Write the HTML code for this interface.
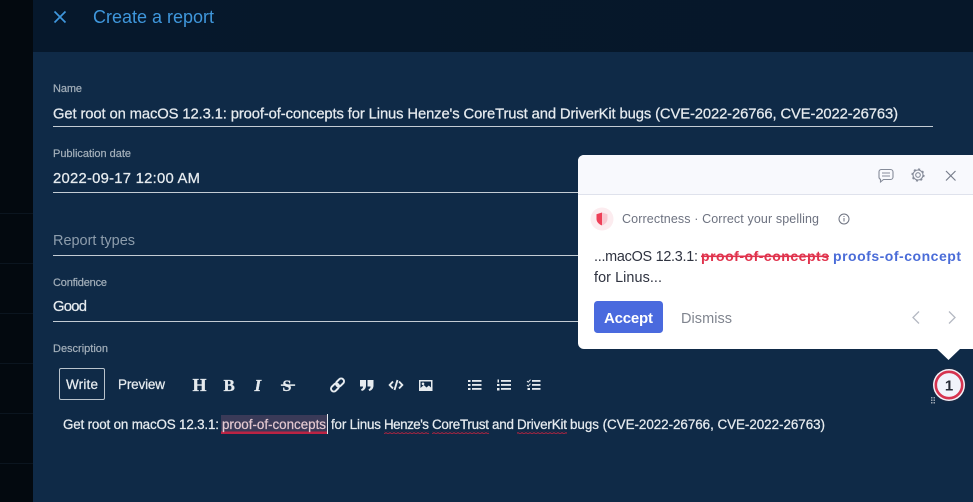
<!DOCTYPE html>
<html><head><meta charset="utf-8"><title>Create a report</title>
<style>
html,body{margin:0;padding:0;background:#03090f;width:973px;height:502px;overflow:hidden}
svg{display:block;position:absolute;left:0;top:0}
text{font-family:"Liberation Sans",sans-serif;white-space:pre}
.lb{font-size:11px;fill:#a3afba;stroke:#a3afba;stroke-width:.2px}
.v{font-size:14.8px;fill:#e6ebef;stroke:#e6ebef;stroke-width:.25px}
.d{font-size:13.4px;fill:#e6ebef;stroke:#e6ebef;stroke-width:.25px}
.p{font-size:14.4px;fill:#2f3340}
</style></head><body>
<svg width="973" height="502" viewBox="0 0 973 502" xmlns="http://www.w3.org/2000/svg">
<defs>
<linearGradient id="hd" x1="0" y1="0" x2="1" y2="0"><stop offset="0" stop-color="#06182c"/><stop offset="1" stop-color="#061729"/></linearGradient>
<pattern id="sq" width="4" height="3" patternUnits="userSpaceOnUse"><path d="M0 2 L2 0.6 L4 2" fill="none" stroke="#a82440" stroke-width="1"/></pattern>
</defs>
<rect width="973" height="502" fill="#0f2a47"/>
<rect x="0" y="0" width="33" height="502" fill="#03090f"/>
<g fill="#0b151f"><rect y="213" width="33" height="1"/><rect y="263" width="33" height="1"/><rect y="313" width="33" height="1"/><rect y="363" width="33" height="1"/><rect y="413" width="33" height="1"/><rect y="463" width="33" height="1"/></g>
<rect x="33" y="0" width="940" height="52" fill="url(#hd)"/>
<path d="M54.500 11.500L65.500 22.500M65.500 11.500L54.500 22.500" stroke="#3f97dc" stroke-width="1.700" fill="none"/>
<text x="93" y="23" font-size="18" fill="#3f97dc" textLength="121">Create a report</text>

<text class="lb" x="53" y="92" textLength="29">Name</text>
<text class="v" x="53" y="118.500" textLength="845">Get root on macOS 12.3.1: proof-of-concepts for Linus Henze's CoreTrust and DriverKit bugs (CVE-2022-26766, CVE-2022-26763)</text>
<rect x="53" y="126" width="880" height="1" fill="#c3ccd4"/>

<text class="lb" x="53" y="157" textLength="78">Publication date</text>
<text class="v" x="53" y="183" textLength="147">2022-09-17 12:00 AM</text>
<rect x="53" y="192" width="880" height="1" fill="#c3ccd4"/>

<text x="53" y="245" font-size="14.5" fill="#8d9dac" textLength="82">Report types</text>
<rect x="53" y="255" width="880" height="1" fill="#c3ccd4"/>

<text class="lb" x="53" y="286" textLength="54">Confidence</text>
<text class="v" x="53" y="311" textLength="34">Good</text>
<rect x="53" y="321" width="880" height="1" fill="#c3ccd4"/>

<text class="lb" x="53" y="352" textLength="55">Description</text>

<rect x="59.500" y="368.500" width="45" height="31" rx="1.500" fill="none" stroke="#b9c3cc" stroke-width="1"/>
<text x="66" y="389" font-size="13.500" fill="#e6ebef" stroke="#e6ebef" stroke-width=".25" textLength="32">Write</text>
<text x="118" y="389" font-size="13.500" fill="#e6ebef" stroke="#e6ebef" stroke-width=".25" textLength="47">Preview</text>

<g fill="#e6ebef" stroke="#e6ebef" stroke-width=".3">
<text x="192.500" y="391" font-size="18" font-weight="700" style="font-family:'Liberation Serif',serif" textLength="15">H</text>
<text x="223.500" y="391" font-size="17" font-weight="700" style="font-family:'Liberation Serif',serif" textLength="11">B</text>
<text x="254.500" y="391" font-size="17" font-weight="700" font-style="italic" style="font-family:'Liberation Serif',serif" textLength="8">I</text>
<text x="282.500" y="391" font-size="16" font-weight="700" style="font-family:'Liberation Serif',serif" textLength="11">S</text>
<rect x="281" y="384.500" width="14" height="1.200"/>
</g>
<g fill="none" stroke="#e6ebef" stroke-width="2" transform="rotate(-45 337.500 385)">
<rect x="329.500" y="382.200" width="9" height="5.600" rx="2.800"/>
<rect x="336.500" y="382.200" width="9" height="5.600" rx="2.800"/>
</g>
<path d="M360 380h6v5.500c0 2.700-1.500 4.800-4.200 5.500l-.8-1.700c1.400-.5 2-1.400 2.100-2.800H360zM367.500 380h6v5.500c0 2.700-1.500 4.800-4.200 5.500l-.8-1.700c1.400-.5 2-1.400 2.100-2.800h-3.100z" fill="#e6ebef"/>
<path d="M393 381.500l-3.300 3.500 3.300 3.500M399 381.500l3.300 3.500-3.300 3.500M397.500 380l-3 10" stroke="#e6ebef" stroke-width="1.900" fill="none"/>
<path fill-rule="evenodd" d="M419 380h13.500v11H419zM420.500 381.500v6.500l3.300-3 2.700 2.500 2.300-2 2.200 2v-6zM423 382.500a1.300 1.300 0 1 1 0 2.600a1.300 1.300 0 1 1 0-2.600z" fill="#e6ebef"/>
<g fill="#e6ebef">
<rect x="468" y="380" width="2.500" height="2"/><rect x="468" y="384" width="2.500" height="2"/><rect x="468" y="388" width="2.500" height="2"/>
<rect x="472" y="380" width="9.500" height="1.800"/><rect x="472" y="384" width="9.500" height="1.800"/><rect x="472" y="388" width="9.500" height="1.800"/>
<rect x="497.500" y="379.500" width="1.500" height="3"/><rect x="497" y="384" width="2.500" height="2"/><rect x="497" y="388" width="2.500" height="2.500"/>
<rect x="501" y="380" width="10" height="1.800"/><rect x="501" y="384" width="10" height="1.800"/><rect x="501" y="388" width="10" height="1.800"/>
<rect x="532" y="380" width="8.500" height="1.800"/><rect x="532" y="384" width="8.500" height="1.800"/><rect x="532" y="388" width="8.500" height="1.800"/>
<rect x="527.500" y="388" width="2.500" height="2"/>
</g>
<path d="M527 381l1.200 1.200 2.300-2.500M527 385l1.200 1.200 2.300-2.500" stroke="#e6ebef" stroke-width="1" fill="none"/>

<rect x="221" y="415" width="106" height="17" fill="#3a3a58"/>
<rect x="221" y="431.500" width="106" height="2.500" fill="#bb2343"/>
<rect x="327" y="414" width="1" height="20" fill="#e6ebef"/>
<text class="d" x="63" y="429" textLength="156">Get root on macOS 12.3.1:</text>
<text x="222" y="429" font-size="13.400" fill="#e3c8d0" stroke="#e3c8d0" stroke-width=".2" textLength="104">proof-of-concepts</text>
<text class="d" x="331" y="429" textLength="50">for Linus</text>
<text class="d" x="384" y="429" textLength="45">Henze's</text>
<text class="d" x="432" y="429" textLength="57">CoreTrust</text>
<text class="d" x="492" y="429" textLength="22">and</text>
<text class="d" x="517" y="429" textLength="50">DriverKit</text>
<text class="d" x="570" y="429" textLength="255">bugs (CVE-2022-26766, CVE-2022-26763)</text>
<rect x="384" y="431" width="45" height="3" fill="url(#sq)"/>
<rect x="432" y="431" width="57" height="3" fill="url(#sq)"/>
<rect x="517" y="431" width="50" height="3" fill="url(#sq)"/>

<path d="M584 155H973V349H584a6 6 0 0 1-6-6V161a6 6 0 0 1 6-6z" fill="#ffffff"/>
<path d="M584 155H973V194H578V161a6 6 0 0 1 6-6z" fill="#f8f9fd"/>
<rect x="578" y="194" width="395" height="1" fill="#dfe2ec"/>
<path d="M937 349H960L948.500 360z" fill="#ffffff"/>

<path d="M881 169.500h9.500a2.500 2.500 0 0 1 2.500 2.500v5a2.500 2.500 0 0 1-2.500 2.500h-7l-3 2.500v-2.600a2.500 2.500 0 0 1-1.500-2.400v-5a2.500 2.500 0 0 1 2-2.500zM882 173h8M882 176h8" stroke="#868c9a" stroke-width="1.100" fill="none"/>
<circle cx="918" cy="175" r="2.300" stroke="#868c9a" stroke-width="1.100" fill="none"/>
<circle cx="918" cy="175" r="5" stroke="#868c9a" stroke-width="1.100" fill="none"/>
<circle cx="918" cy="175" r="5.800" stroke="#868c9a" stroke-width="1.600" stroke-dasharray="2 2.550" fill="none"/>
<path d="M946 171l9.500 9.500M955.500 171l-9.500 9.500" stroke="#787e8c" stroke-width="1.200" fill="none"/>

<circle cx="602" cy="219" r="11.500" fill="#fcecef"/>
<path d="M602 212.500l5.500 1.800v4.500c0 3.200-2.400 5.500-5.500 6.700c-3.100-1.200-5.500-3.500-5.500-6.700v-4.500z" fill="#f9c7d0"/>
<path d="M602 212.500v12.900c-3.100-1.200-5.500-3.500-5.500-6.700v-4.500z" fill="#ee4058"/>
<text x="622" y="223" font-size="12.500" fill="#6d7280" textLength="197">Correctness · Correct your spelling</text>
<circle cx="844" cy="219" r="5" fill="none" stroke="#6d7280" stroke-width="1"/>
<rect x="843.500" y="218" width="1" height="3.500" fill="#6d7280"/><rect x="843.500" y="216" width="1" height="1" fill="#6d7280"/>

<text class="p" x="594" y="261" textLength="104">...macOS 12.3.1:</text>
<text x="701" y="261" font-size="14" font-weight="700" fill="#e0334d" textLength="128">proof-of-concepts</text>
<rect x="701" y="255.500" width="128" height="1.600" fill="#e0334d"/>
<text x="833" y="261" font-size="14" font-weight="700" fill="#4a6cd8" textLength="128">proofs-of-concept</text>
<text class="p" x="594" y="282" textLength="68">for Linus...</text>

<rect x="594" y="301" width="69" height="32" rx="3.500" fill="#4a6ade"/>
<text x="604" y="323" font-size="15" font-weight="700" fill="#ffffff" textLength="49">Accept</text>
<text x="681" y="323" font-size="14.500" fill="#80858f" textLength="51">Dismiss</text>
<path d="M919 311.500l-6 6 6 6" stroke="#b4b8c2" stroke-width="1.300" fill="none"/>
<path d="M949 311.500l6 6-6 6" stroke="#b4b8c2" stroke-width="1.300" fill="none"/>

<circle cx="949" cy="385" r="17" fill="#1d2a43"/>
<circle cx="949" cy="385" r="16" fill="#f1f3fb"/>
<circle cx="949" cy="385" r="13.200" fill="#f1f3fb" stroke="#d6334f" stroke-width="2.600"/>
<text x="949" y="390.500" font-size="15" font-weight="700" fill="#252a35" text-anchor="middle">1</text>
<g fill="#9aa4b0"><rect x="931" y="397" width="1.500" height="1.500"/><rect x="933.500" y="397" width="1.500" height="1.500"/><rect x="931" y="399.500" width="1.500" height="1.500"/><rect x="933.500" y="399.500" width="1.500" height="1.500"/><rect x="931" y="402" width="1.500" height="1.500"/><rect x="933.500" y="402" width="1.500" height="1.500"/></g>
</svg>
</body></html>
